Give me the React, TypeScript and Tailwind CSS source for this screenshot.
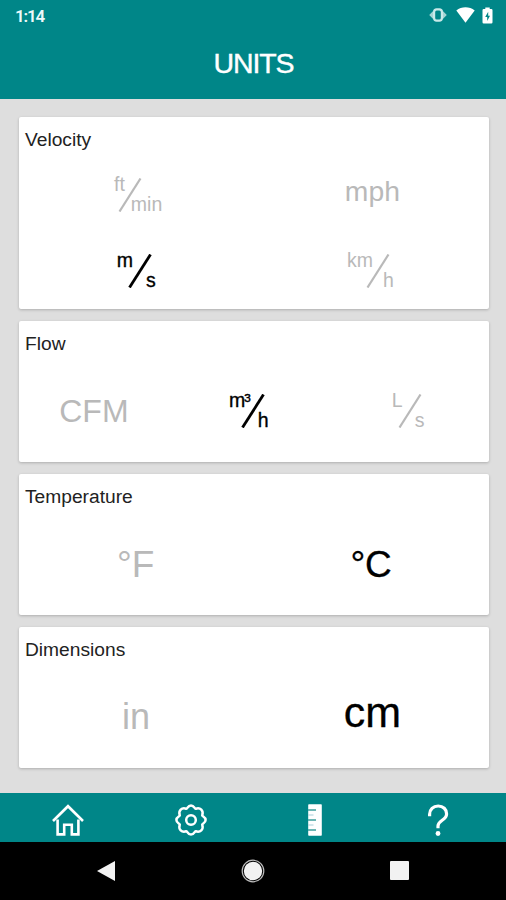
import { ReactNode } from 'react';

interface FractionProps {
  top: ReactNode;
  bottom: string;
  active?: boolean;
  topClass?: string;
  bottomClass?: string;
}

function Fraction({ top, bottom, active, topClass = '', bottomClass = '' }: FractionProps) {
  return (
    <span
      className={`flex h-[34px] text-[19.5px] leading-[19px] ${active ? 'text-black [-webkit-text-stroke:0.35px_black]' : 'text-[#b9b9b9]'}`}
    >
      <span className={`-mt-[3px] self-start ${topClass}`}>{top}</span>
      <svg width="24" height="34" viewBox="0 0 24 34" className="shrink-0">
        <path d="M1.5 33.5L22.5 0.5" stroke="currentColor" strokeWidth={active ? 2.8 : 2.2} fill="none" />
      </svg>
      <span className={`-mb-[2px] self-end ${bottomClass}`}>{bottom}</span>
    </span>
  );
}

function Card({ title, cols, rows, children }: { title: string; cols: string; rows: string; children: ReactNode }) {
  return (
    <section className="rounded-[2px] bg-white shadow-[0_1px_3px_rgba(0,0,0,0.22)]">
      <h2 className="h-[39.5px] pl-[6.5px] pt-[12px] text-[19.2px] leading-[22px] text-[#222]">{title}</h2>
      <div className={`grid ${cols} ${rows}`}>{children}</div>
    </section>
  );
}

function Cell({ className = '', children }: { className?: string; children: ReactNode }) {
  return (
    <button type="button" className={`flex items-center justify-center whitespace-nowrap leading-none ${className}`}>
      {children}
    </button>
  );
}

function StatusIcons() {
  return (
    <div className="flex items-center pb-[2px]">
      <svg width="18" height="14" viewBox="0 0 18 14" className="mr-[9px]">
        <path d="M4.6 2.6L0.2 7l4.4 4.4zM13.4 2.6L17.8 7l-4.4 4.4z" fill="#a5d5d5" />
        <rect x="5.1" y="1.4" width="7.8" height="11.2" rx="2.6" fill="none" stroke="#c9e9e9" strokeWidth="2.2" />
      </svg>
      <svg width="19" height="16" viewBox="0 0 19 16" className="mr-[7px]">
        <path d="M0.3 3.4C5.5-0.8 13.5-0.8 18.7 3.4L9.5 15.8z" fill="#fff" />
      </svg>
      <svg width="11" height="17" viewBox="0 0 11 17">
        <path d="M3.3 0.5h4.4v1.6h1.6q1.2 0 1.2 1.2v12q0 1.2-1.2 1.2H1.7q-1.2 0-1.2-1.2v-12q0-1.2 1.2-1.2h1.6z" fill="#fff" />
        <path d="M6.2 4.8L3.2 10h2v4l2.8-5.2H6.2z" fill="#008688" />
      </svg>
    </div>
  );
}

export default function App() {
  return (
    <div className="flex h-[900px] w-[506px] flex-col overflow-hidden bg-[#dedede] font-['Liberation_Sans',Arial,sans-serif]">
      <header className="h-[98.5px] shrink-0 bg-[#008688] text-white">
        <div className="flex h-8 items-center justify-between pl-[15px] pr-[13px]">
          <span className="font-[Roboto,sans-serif] text-[17px] font-semibold leading-none tracking-[-1.2px] text-[#eefafa]">1:14</span>
          <StatusIcons />
        </div>
        <h1 className="pl-px pt-[15px] text-center text-[28.5px] leading-[32px] tracking-[-1.1px] [-webkit-text-stroke:0.4px_white]">UNITS</h1>
      </header>

      <main className="flex flex-1 flex-col gap-[12.5px] pl-[18.5px] pr-[17px] pt-[18.5px]">
        <Card title="Velocity" cols="grid-cols-2" rows="auto-rows-[76px]">
          <Cell className="pl-[4px]">
            <Fraction top="ft" bottom="min" topClass="-mr-[7px]" bottomClass="-ml-[11px]" />
          </Cell>
          <Cell className="pb-[6px] pl-[2px] text-[28.3px] text-[#b9b9b9]">mph</Cell>
          <Cell>
            <Fraction top="m" bottom="s" active topClass="-mr-[5px]" bottomClass="-ml-[6px]" />
          </Cell>
          <Cell className="pr-[2px]">
            <Fraction top="km" bottom="h" topClass="-mr-[7px]" bottomClass="-ml-[7px]" />
          </Cell>
        </Card>

        <Card title="Flow" cols="grid-cols-3" rows="auto-rows-[101px]">
          <Cell className="pr-[6px] text-[32px] text-[#b9b9b9]">CFM</Cell>
          <Cell className="pr-[10px]">
            <Fraction
              top={<>m<span className="-ml-px">³</span></>}
              bottom="h"
              active
              topClass="-mr-[10px]"
              bottomClass="-ml-[7px]"
            />
          </Cell>
          <Cell className="pr-[5px]">
            <Fraction top="L" bottom="s" topClass="-mr-[5px]" bottomClass="-ml-[7px]" />
          </Cell>
        </Card>

        <Card title="Temperature" cols="grid-cols-2" rows="auto-rows-[101px]">
          <Cell className="pr-px text-[37px] text-[#b9b9b9]">°F</Cell>
          <Cell className="pr-px text-[37px] tracking-[-0.5px] text-black [-webkit-text-stroke:0.3px_black]">°C</Cell>
        </Card>

        <Card title="Dimensions" cols="grid-cols-2" rows="auto-rows-[101px]">
          <Cell className="text-[36px] text-[#b9b9b9]">in</Cell>
          <Cell className="pb-[9px] pl-[2px] text-[43px] text-black [-webkit-text-stroke:0.3px_black]">cm</Cell>
        </Card>
      </main>

      <nav className="grid h-[49px] shrink-0 grid-cols-4 place-items-center bg-[#008688] px-1.5 pt-[5px] text-white">
        <svg width="32" height="32" viewBox="0 0 32 32" fill="none" stroke="currentColor" strokeWidth="2.6">
          <path d="M1 17L16 2.2L31 17" />
          <path d="M5.6 15.5V30.4H12.2V20.7H19.8V30.4H26.4V15.5" />
        </svg>
        <svg width="32" height="32" viewBox="-16 -16 32 32" fill="none" stroke="currentColor" strokeWidth="2.5" strokeLinejoin="round">
          <path d="M-4.6 -11.2C-3.4 -11.3 -3.2 -14.6 0 -14.6S3.4 -11.3 4.6 -11.2C5.6 -11.5 8 -12.6 10.3 -10.3S11.5 -5.6 11.2 -4.6C11.3 -3.4 14.6 -3.2 14.6 0S11.3 3.4 11.2 4.6C11.5 5.6 12.6 8 10.3 10.3S5.6 11.5 4.6 11.2C3.4 11.3 3.2 14.6 0 14.6S-3.4 11.3 -4.6 11.2C-5.6 11.5 -8 12.6 -10.3 10.3S-11.5 5.6 -11.2 4.6C-11.3 3.4 -14.6 3.2 -14.6 0S-11.3 -3.4 -11.2 -4.6C-11.5 -5.6 -12.6 -8 -10.3 -10.3S-5.6 -11.5 -4.6 -11.2Z" />
          <circle r="4.8" />
        </svg>
        <svg width="14" height="32" viewBox="0 0 14 32">
          <rect x="0.2" y="0.3" width="13.6" height="31.4" rx="0.8" fill="currentColor" />
          <path d="M0 6h8M0 16h8M0 26h8" stroke="#3f9f9d" strokeWidth="1.5" />
          <path d="M0 11h5.5M0 21h5.5" stroke="#a9cfdc" strokeWidth="1.2" />
        </svg>
        <svg width="22" height="32" viewBox="0 0 22 32" fill="none" stroke="currentColor" strokeWidth="3.2">
          <path d="M2.6 12.2V10.2C2.6 5.5 6.2 2 11.2 2S19.6 5.4 19.6 9.9C19.6 16.2 11 16.2 11 22V24.2" />
          <circle cx="11" cy="29.5" r="2.4" fill="currentColor" stroke="none" />
        </svg>
      </nav>

      <footer className="grid h-[58.5px] shrink-0 grid-cols-3 place-items-center bg-black px-[33px]">
        <svg width="20" height="22" viewBox="0 0 20 22">
          <path d="M1 11L19 1V21Z" fill="#f2f2f2" />
        </svg>
        <svg width="24" height="24" viewBox="0 0 24 24">
          <circle cx="12" cy="12" r="10.8" fill="none" stroke="#bdbdbd" strokeWidth="1.2" />
          <circle cx="12" cy="12" r="9.2" fill="#f2f2f2" />
        </svg>
        <span className="h-[19px] w-[19px] rounded-[1px] bg-[#f2f2f2]" />
      </footer>
    </div>
  );
}
